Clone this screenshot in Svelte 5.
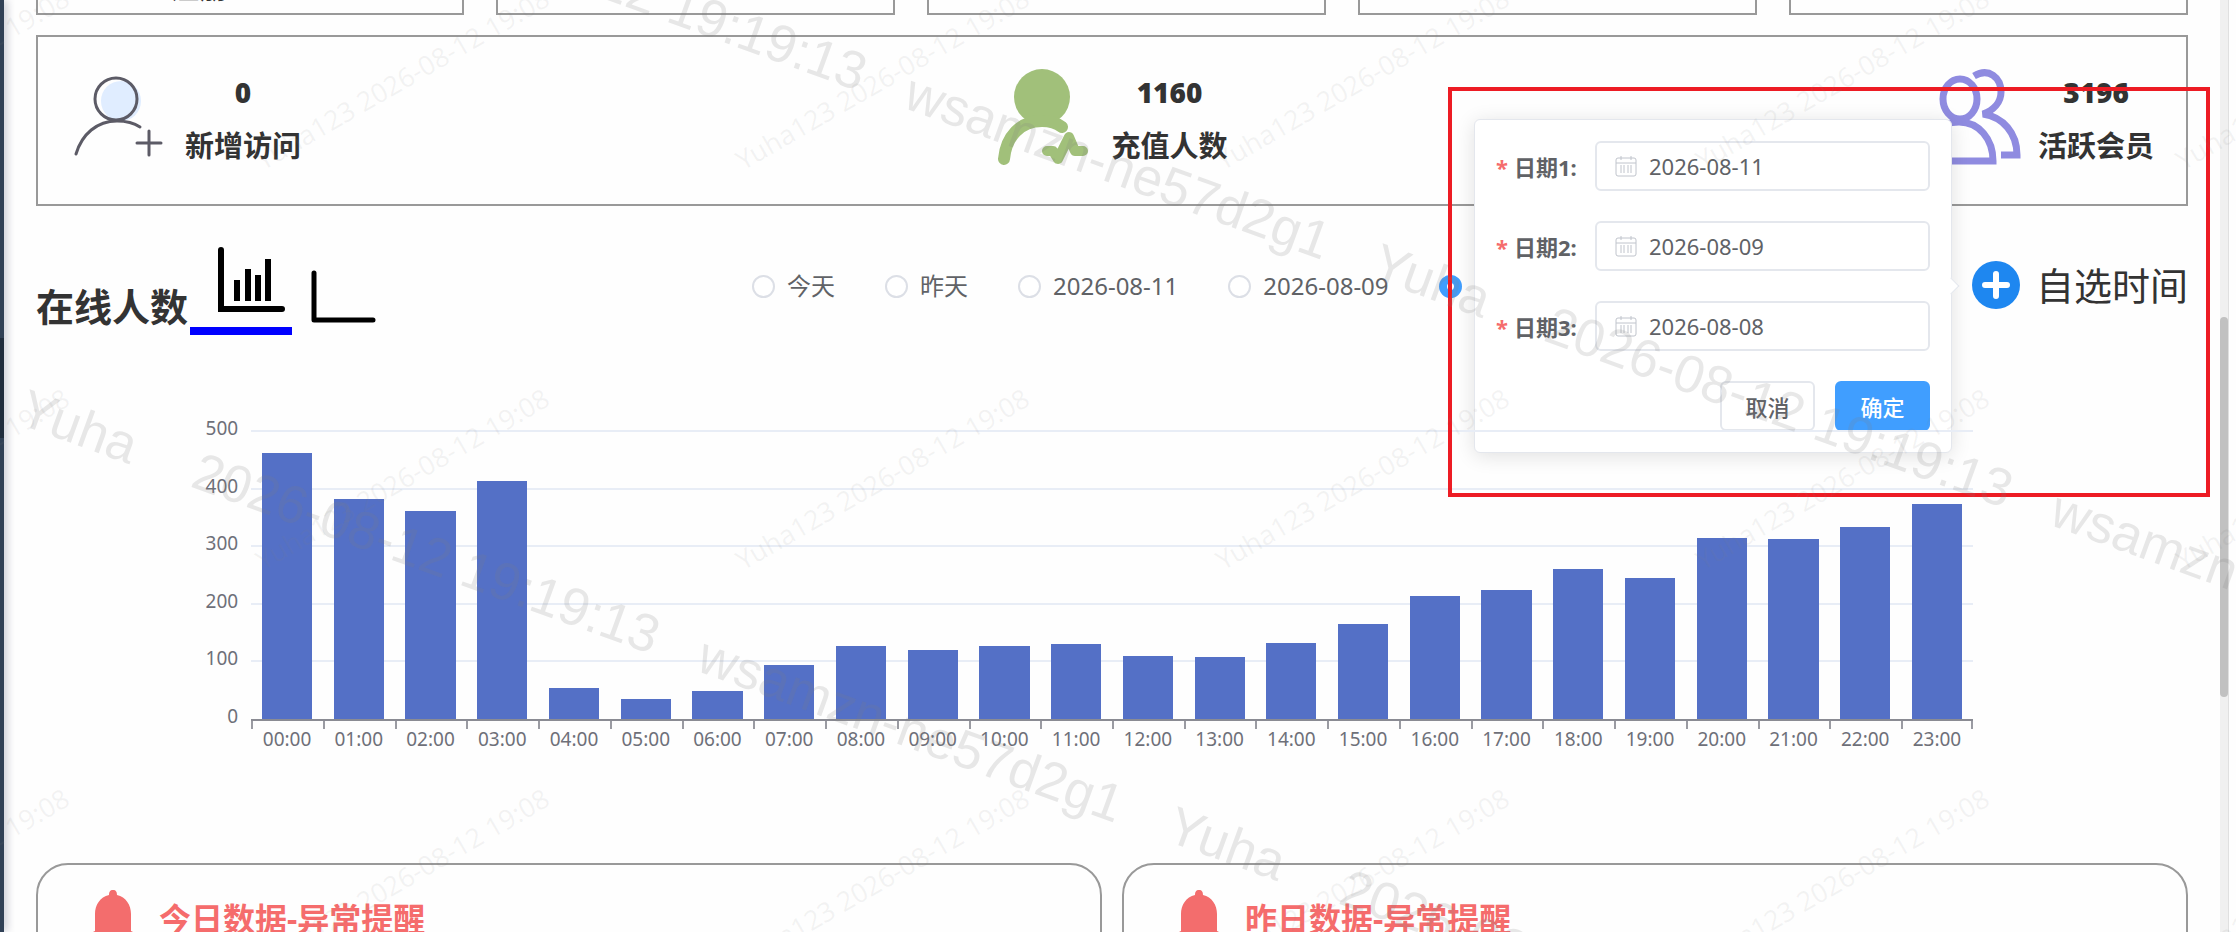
<script lang="ts">
  interface Hour {
    label: string
    value: number
  }

  const values = [
    462, 382, 362, 414, 54, 35, 49, 94, 127, 119, 127, 130,
    109, 107, 132, 165, 214, 224, 260, 245, 314, 312, 334, 374
  ]
  const hours: Hour[] = values.map((value, i) => ({
    label: `${String(i).padStart(2, '0')}:00`,
    value
  }))
  const max = 500
  const ticks = [500, 400, 300, 200, 100, 0]

  const topCards = ['注册', '', '', '', '']
  const radios = ['今天', '昨天', '2026-08-11', '2026-08-09', '2026-08-08']
  const alerts = ['今日数据-异常提醒', '昨日数据-异常提醒']

  let selected = $state('2026-08-08')
  let chartType = $state('bar')
  let popoverOpen = $state(true)
  let dates = $state(['2026-08-11', '2026-08-09', '2026-08-08'])

  // watermark origins
  const smallMarks = [171, 571, 971].flatMap((y) =>
    [-217, 263, 743, 1223, 1703, 2183].map((x) => ({ x, y }))
  )
  const bigMarks = [
    { x: 16, y: 423 },
    { x: 1164, y: 840 },
    { x: 223, y: -140 },
    { x: 1369, y: 277 }
  ]
</script>

<div class="shell">
  <aside class="sidebar"><div class="sidebar-active"></div></aside>

  <main class="content">
    <section class="top-cards">
      {#each topCards as card}
        <div class="top-card">{card}</div>
      {/each}
    </section>

    <section class="stats">
      <div class="stat">
        <svg class="stat-icon" viewBox="0 0 93 100" fill="none">
          <circle cx="51" cy="48" r="20" fill="#e0edff" />
          <g stroke="#5c5b66" stroke-width="3" stroke-linecap="round">
            <circle cx="46" cy="46" r="21" />
            <path d="M6 101C12 81 27 68 47 68C56 68 64 70 70 74" />
            <path d="M79 78v24M67 90h24" />
          </g>
        </svg>
        <div class="stat-text"><strong>0</strong><span>新增访问</span></div>
      </div>
      <div class="stat">
        <svg class="stat-icon" viewBox="0 0 93 100" fill="none">
          <circle cx="46" cy="44" r="28" fill="#a1c07a" />
          <g stroke="#a1c07a" stroke-linecap="round" stroke-linejoin="round">
            <path stroke-width="12" d="M8 106C10 84 24 68 46 68C54 68 61 70 66 74" />
            <path stroke-width="10" d="M51 98h6l5 8 11-22 6 14h8" />
          </g>
        </svg>
        <div class="stat-text"><strong>1160</strong><span>充值人数</span></div>
      </div>
      <div class="stat">
        <svg class="stat-icon" viewBox="0 0 93 100" fill="none">
          <g stroke="#8f8be0" stroke-width="7">
            <ellipse cx="37" cy="46" rx="17" ry="20" />
            <path d="M2 108C2 84 16 69 36 69C56 69 70 86 70 108Z" />
            <path d="M51 23C66 14 78 25 78 39C78 49 71 57 60 61C80 64 94 80 94 102H78" />
          </g>
        </svg>
        <div class="stat-text"><strong>3196</strong><span>活跃会员</span></div>
      </div>
    </section>

    <section class="toolbar">
      <div class="heading">
        <h2>在线人数</h2>
        <button class="tab" class:active={chartType === 'bar'} aria-label="柱状图" onclick={() => (chartType = 'bar')}>
          <svg viewBox="0 0 102 88" fill="none" stroke="#000" stroke-width="6">
            <path d="M31 12v59h61" stroke-linecap="round" />
            <path d="M47 42v21M58 31v32M68 37v26M78 21v42" />
          </svg>
        </button>
        <button class="tab" class:active={chartType === 'line'} aria-label="折线图" onclick={() => (chartType = 'line')}>
          <svg viewBox="0 0 102 88" fill="none" stroke="#000" stroke-width="5">
            <path d="M22 35v47h59" stroke-linecap="round" stroke-linejoin="round" />
          </svg>
        </button>
      </div>

      <div class="radios">
        {#each radios as day}
          <label class="radio">
            <input type="radio" name="day" value={day} bind:group={selected} />
            <span>{day}</span>
          </label>
        {/each}
      </div>

      <div class="custom">
        <button class="custom-btn" onclick={() => (popoverOpen = !popoverOpen)}>
          <svg viewBox="0 0 48 48">
            <circle cx="24" cy="24" r="24" fill="#1e87f0" />
            <path d="M24 13v22M13 24h22" stroke="#fff" stroke-width="6" stroke-linecap="round" />
          </svg>
          自选时间
        </button>

        {#if popoverOpen}
          <form class="popover" onsubmit={(e) => e.preventDefault()}>
            {#each dates as _, i}
              <div class="field">
                <label for="date-{i}"><em>*</em>日期{i + 1}:</label>
                <div class="date-box">
                  <svg viewBox="0 0 22 22" fill="none" stroke="#c0c4cc">
                    <rect x="1" y="3" width="20" height="18" rx="2" />
                    <path d="M1 8h20M6 1v4M16 1v4M6 10v8M9 10v8M13 10v8M16 10v8" />
                  </svg>
                  <input id="date-{i}" type="text" bind:value={dates[i]} />
                </div>
              </div>
            {/each}
            <div class="actions">
              <button type="button" class="btn" onclick={() => (popoverOpen = false)}>取消</button>
              <button type="submit" class="btn primary">确定</button>
            </div>
          </form>
        {/if}
      </div>
    </section>

    <section class="chart">
      <div class="plot">
        <div class="grid">
          {#each ticks as tick}
            <div class="grid-line"><span>{tick}</span></div>
          {/each}
        </div>
        <div class="bars">
          {#each hours as hour}
            <div class="bar-slot">
              <div class="bar" style="height: {(hour.value / max) * 100}%"></div>
            </div>
          {/each}
        </div>
      </div>
      <div class="axis">
        {#each hours as hour}
          <span>{hour.label}</span>
        {/each}
      </div>
    </section>

    <section class="alerts">
      {#each alerts as title}
        <article class="alert">
          <svg viewBox="0 0 44 56" fill="#f36d6d">
            <path d="M22 0c3 0 4 2 4 5c9 2 14 10 14 19v17c3 1 4 3 4 6c0 2-1 2-3 2H3c-2 0-3 0-3-2c0-3 1-5 4-6V24C4 15 9 7 18 5c0-3 1-5 4-5Z" />
            <path d="M15 51h14c-1 6-13 6-14 0Z" />
          </svg>
          <h3>{title}</h3>
        </article>
      {/each}
    </section>
  </main>

  <div class="scrollbar"><div class="thumb"></div></div>

  <div class="marker"></div>

  <svg class="watermark" aria-hidden="true">
    <g class="small">
      {#each smallMarks as mark}
        <text transform="translate({mark.x} {mark.y}) rotate(-30)">Yuha123 2026-08-12 19:08</text>
      {/each}
    </g>
    <g class="big">
      {#each bigMarks as mark}
        <g transform="translate({mark.x} {mark.y}) rotate(20)">
          <text x="0">Yuha</text>
          <text x="184">2026-08-12 19:19:13</text>
          <text x="722">wsamzn-ne57d2g1</text>
        </g>
      {/each}
    </g>
  </svg>
</div>

<style>
  :global(body) {
    background: #fefefe;
    color: #333;
    font-family: 'Noto Sans', 'Noto Sans CJK SC', sans-serif;
  }

  .shell {
    position: relative;
    display: flex;
    height: 100vh;
    overflow: hidden;
  }

  button,
  input {
    font-family: inherit;
  }

  .sidebar {
    width: 4px;
    flex-shrink: 0;
    padding-top: 338px;
    box-sizing: border-box;
    background: #304156;
    box-shadow: 1px 0 10px rgba(0, 21, 60, 0.45);
  }

  .sidebar-active {
    height: 100px;
    background: #1f2d3d;
  }

  .content {
    flex: 1;
    min-width: 0;
    padding: 0 32px;
  }

  .top-cards {
    display: grid;
    grid-template-columns: 428fr 399fr 399fr 399fr 399fr;
    gap: 32px;
    margin-top: -155px;
  }

  .top-card {
    height: 170px;
    box-sizing: border-box;
    border: 2px solid #999;
    padding: 121px 0 0 132px;
    font-size: 29px;
    font-weight: 700;
    line-height: 40px;
  }

  .stats {
    display: flex;
    justify-content: space-between;
    height: 171px;
    box-sizing: border-box;
    margin-top: 20px;
    padding: 16px 32px 0;
    border: 2px solid #999;
  }

  .stat {
    display: flex;
    gap: 22px;
  }

  .stat-icon {
    width: 93px;
    height: 100px;
    overflow: visible;
  }

  .stat-text {
    display: flex;
    flex-direction: column;
    align-items: center;
    gap: 14px;
    padding-top: 19px;
    font-size: 29px;
    font-weight: 700;
    line-height: 40px;
  }

  .stat-text strong {
    font-size: 28px;
  }

  .toolbar {
    display: flex;
    justify-content: space-between;
    align-items: flex-start;
    margin-top: 32px;
    height: 130px;
  }

  .heading {
    display: flex;
    align-items: flex-end;
    width: 716px;
  }

  .heading h2 {
    margin: 0;
    padding: 0 2px 2px 0;
    font-size: 38px;
    line-height: 54px;
  }

  .tab {
    width: 102px;
    height: 97px;
    padding: 0 0 1px;
    border: 0;
    border-bottom: 8px solid transparent;
    background: none;
    cursor: pointer;
  }

  .tab.active {
    border-color: #00f;
  }

  .tab svg {
    display: block;
    width: 102px;
    height: 88px;
  }

  .radios {
    display: flex;
    flex: 1;
    gap: 50px;
    padding-top: 32px;
  }

  .radio {
    display: flex;
    align-items: center;
    gap: 12px;
    font-size: 24px;
    line-height: 32px;
    color: #606266;
    white-space: nowrap;
  }

  .radio input {
    appearance: none;
    width: 23px;
    height: 23px;
    margin: 0;
    border: 2px solid #dcdfe6;
    border-radius: 50%;
    background: #fff;
  }

  .radio input:checked {
    border: 8px solid #409eff;
  }

  .radio input:checked + span {
    color: #409eff;
  }

  .custom {
    position: relative;
    padding-top: 20px;
  }

  .custom-btn {
    display: flex;
    align-items: center;
    gap: 16px;
    padding: 0;
    border: 0;
    background: none;
    color: #333;
    font-size: 38px;
    line-height: 54px;
    white-space: nowrap;
    cursor: pointer;
  }

  .custom-btn svg {
    width: 48px;
    height: 48px;
  }

  /* opens to the left of the button, centred on it */
  .popover {
    position: absolute;
    right: 100%;
    top: 50%;
    transform: translateY(-50%);
    display: flex;
    flex-direction: column;
    gap: 30px;
    width: 478px;
    box-sizing: border-box;
    margin: 11px 20px 0 0;
    padding: 21px;
    border: 1px solid #e4e7ed;
    border-radius: 6px;
    background: #fff;
    box-shadow: 0 3px 20px rgba(0, 0, 0, 0.12);
  }

  .popover::after {
    content: '';
    position: absolute;
    right: -6px;
    top: 50%;
    width: 12px;
    height: 12px;
    margin-top: -6px;
    border: solid #e4e7ed;
    border-width: 1px 1px 0 0;
    background: #fff;
    box-sizing: border-box;
    transform: rotate(45deg);
  }

  .field {
    display: flex;
    align-items: center;
  }

  .field label {
    flex: 1;
    font-size: 22px;
    font-weight: 700;
    color: #606266;
    white-space: nowrap;
  }

  .field em {
    margin-right: 6px;
    color: #f56c6c;
    font-style: normal;
  }

  .date-box {
    display: flex;
    align-items: center;
    gap: 12px;
    width: 335px;
    height: 50px;
    box-sizing: border-box;
    padding: 0 18px;
    border: 2px solid #e4e7ed;
    border-radius: 6px;
  }

  .date-box svg {
    width: 22px;
    height: 22px;
    flex-shrink: 0;
  }

  .date-box input {
    flex: 1;
    min-width: 0;
    padding: 0;
    border: 0;
    outline: 0;
    background: none;
    color: #606266;
    font-size: 22px;
  }

  .actions {
    display: flex;
    justify-content: flex-end;
    gap: 20px;
  }

  .btn {
    width: 95px;
    height: 50px;
    border: 2px solid #e4e7ed;
    border-radius: 6px;
    background: #fff;
    color: #606266;
    font-size: 22px;
    font-weight: 500;
    cursor: pointer;
  }

  .btn.primary {
    border-color: #409eff;
    background: #409eff;
    color: #fff;
  }

  .chart {
    margin-top: 63px;
    padding: 0 10%;
    color: #6e7079;
    font-size: 19px;
  }

  .plot {
    position: relative;
    height: 288px;
    border-bottom: 2px solid #8a8b93;
  }

  .grid {
    display: flex;
    flex-direction: column;
    justify-content: space-between;
    height: 100%;
  }

  .grid-line {
    display: flex;
    align-items: center;
    height: 0;
  }

  .grid-line::after {
    content: '';
    flex: 1;
    height: 2px;
    background: #e8edf6;
  }

  .grid-line:last-child::after {
    height: 0;
  }

  .grid-line span {
    width: 100px;
    margin: 0 13px 6px -113px;
    text-align: right;
  }

  .bars {
    position: absolute;
    inset: 0;
    display: flex;
  }

  .bar-slot {
    flex: 1;
    display: flex;
    align-items: flex-end;
    justify-content: center;
  }

  .bar {
    width: 70%;
    background: #5470c6;
  }

  .axis {
    display: flex;
    border-right: 2px solid transparent;
    margin-right: -2px;
  }

  .axis span {
    position: relative;
    flex: 1;
    padding-top: 6px;
    line-height: 24px;
    text-align: center;
  }

  .axis span::before,
  .axis span:last-child::after {
    content: '';
    position: absolute;
    left: 0;
    top: 0;
    width: 2px;
    height: 8px;
    background: #9a9ba2;
  }

  .axis span:last-child::after {
    left: auto;
    right: 0;
  }

  .alerts {
    display: grid;
    grid-template-columns: 1fr 1fr;
    gap: 20px;
    margin-top: 112px;
  }

  .alert {
    display: flex;
    gap: 24px;
    height: 300px;
    box-sizing: border-box;
    padding: 25px 53px;
    border: 2px solid #999;
    border-radius: 32px;
  }

  .alert svg {
    width: 44px;
    height: 56px;
  }

  .alert h3 {
    margin: 5px 0 0;
    color: #f56c6c;
    font-size: 32px;
    font-weight: 700;
    line-height: 48px;
  }

  .scrollbar {
    width: 9px;
    flex-shrink: 0;
    margin-right: 7px;
    padding-top: 317px;
    box-sizing: border-box;
    border-right: 1px solid #e0e0e0;
    background: #f0f0f0;
  }

  .thumb {
    height: 380px;
    border-radius: 4px;
    background: #c1c1c1;
  }

  /* highlight frame over the date picker */
  .marker {
    position: absolute;
    top: 87px;
    right: 26px;
    width: 762px;
    height: 410px;
    box-sizing: border-box;
    border: 4px solid #ed1c24;
    pointer-events: none;
  }

  .watermark {
    position: absolute;
    inset: 0;
    width: 100%;
    height: 100%;
    pointer-events: none;
  }

  .small {
    font-size: 27px;
    fill: rgba(128, 128, 128, 0.09);
  }

  .big {
    font-family: 'Liberation Sans', sans-serif;
    font-size: 53px;
    fill: rgba(128, 128, 128, 0.18);
  }
</style>
